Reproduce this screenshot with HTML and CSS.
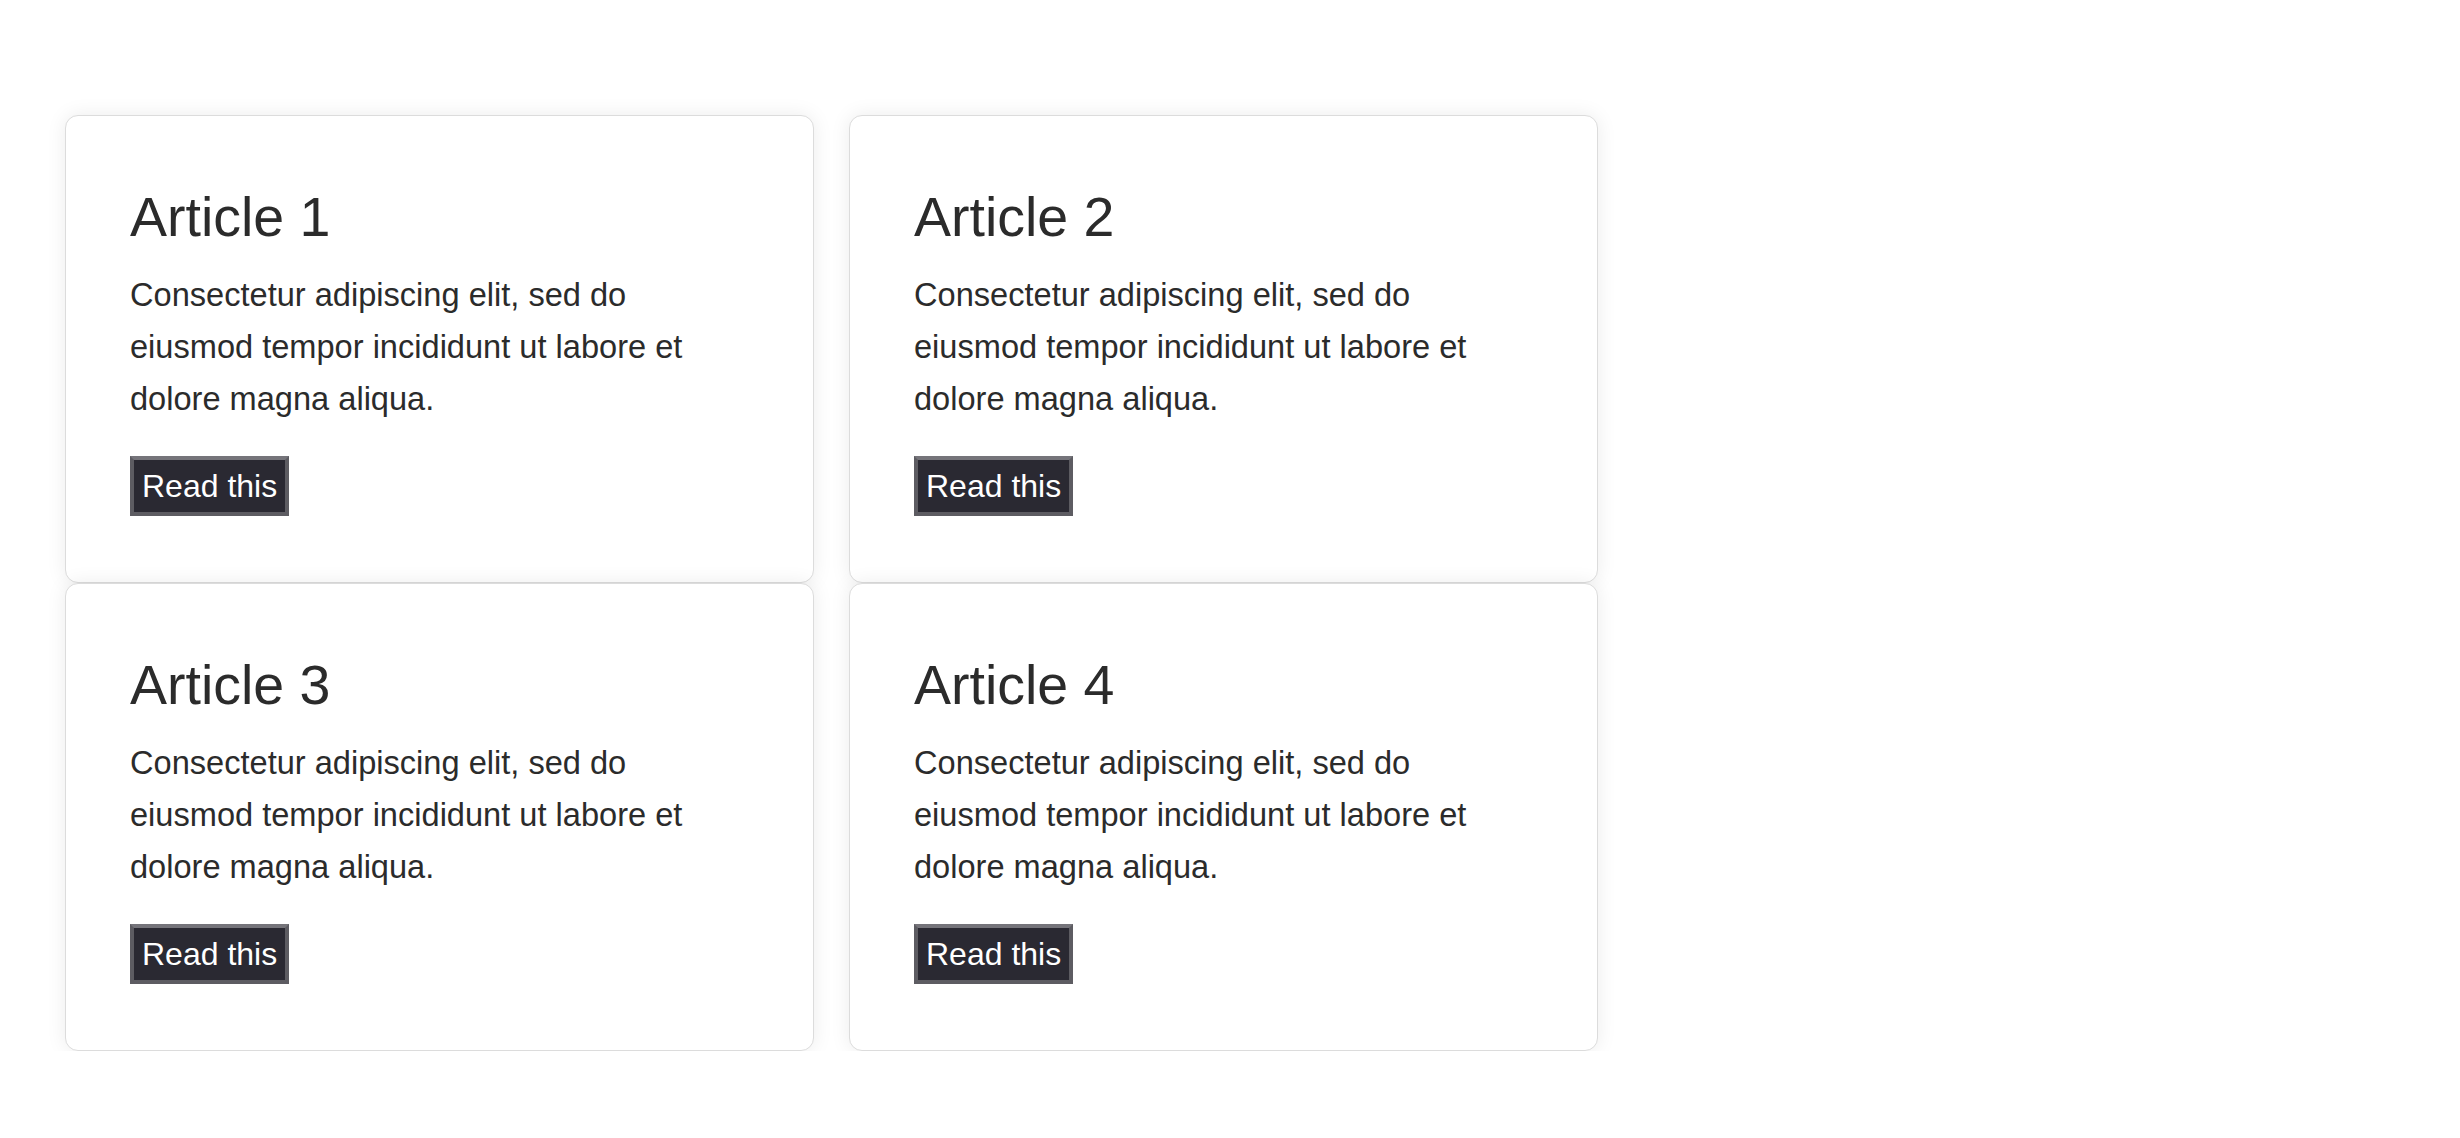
FILE: index.html
```html
<!DOCTYPE html>
<html lang="en">
<head>
  <meta charset="UTF-8">
  <title>Articles</title>
  <link rel="stylesheet" href="styles.css">
</head>
<body>

  <div class="articles">
    <!-- 1 -->
    <div class="card">
      <h2>Article 1</h2>
      <p>Consectetur adipiscing elit, sed do eiusmod tempor incididunt ut labore et dolore magna aliqua.</p>
      <button class="read">Read this</button>
    </div>
    <!-- 2 -->
    <div class="card">
      <h2>Article 2</h2>
      <p>Consectetur adipiscing elit, sed do eiusmod tempor incididunt ut labore et dolore magna aliqua.</p>
      <button class="read">Read this</button>
    </div>
    <!-- 3 -->
    <div class="card">
      <h2>Article 3</h2>
      <p>Consectetur adipiscing elit, sed do eiusmod tempor incididunt ut labore et dolore magna aliqua.</p>
      <button class="read">Read this</button>
    </div>
    <!-- 4 -->
    <div class="card">
      <h2>Article 4</h2>
      <p>Consectetur adipiscing elit, sed do eiusmod tempor incididunt ut labore et dolore magna aliqua.</p>
      <button class="read">Read this</button>
    </div>
  </div>

</body>
</html>
```

FILE: styles.css
```css
body {
  margin: 0;
  background: #fff;
  color: #2b2b2b;
  font-family: "Liberation Sans", Arial, sans-serif;
}
.articles {
  display: grid;
  grid-template-columns: repeat(2, 749px);
  column-gap: 35px;
  padding: 115px 0 0 65px;
}
.card {
  background: #fff;
  border: 1px solid #dcdcdc;
  border-radius: 13px;
  box-shadow: 0 0 20px rgba(0, 0, 0, 0.08);
  padding: 68px 64px 66px 64px;
}
.card h2 {
  margin: 0;
  font-size: 55.5px;
  font-weight: normal;
  line-height: 66px;
}
.card p {
  margin: 19px 0 31px;
  font-size: 32.6px;
  line-height: 52px;
  max-width: 610px;
}
.read {
  display: block;
  font-family: "Liberation Sans", Arial, sans-serif;
  font-size: 32px;
  line-height: 38px;
  padding: 7px 8px;
  color: #fff;
  background: #2a2932;
  border: 4px solid #5d5c62;
  border-top-color: #75747a;
  border-radius: 0;
}
```
